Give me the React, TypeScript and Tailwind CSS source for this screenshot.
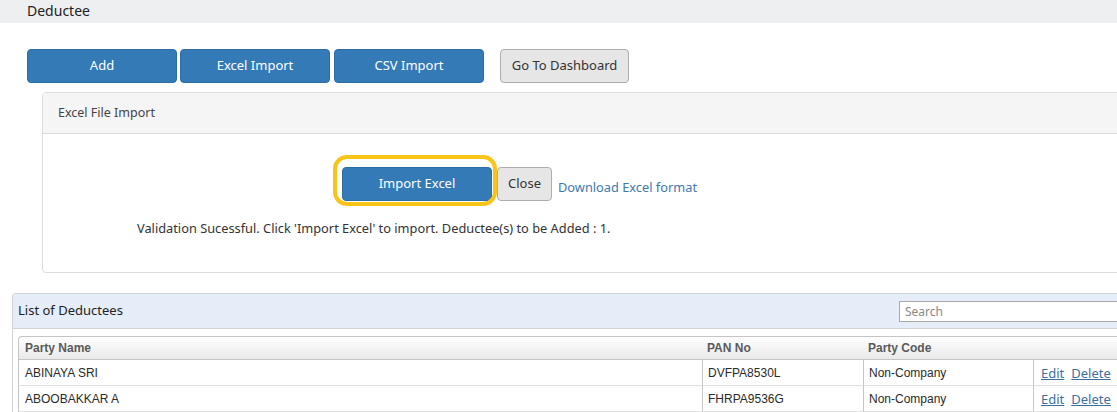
import React from "react";

type Deductee = { name: string; pan: string; code: string };

const ROWS: Deductee[] = [
  { name: "ABINAYA SRI", pan: "DVFPA8530L", code: "Non-Company" },
  { name: "ABOOBAKKAR A", pan: "FHRPA9536G", code: "Non-Company" },
];

const BLUE_BTN =
  "h-[34px] rounded-[4px] border border-[#2e6da4] bg-[#337ab7] text-white text-[13px] flex items-center justify-center";

export default function App() {
  return (
    <div className="w-[1117px] h-[412px] overflow-hidden bg-white text-[#333] font-['Noto_Sans',sans-serif]">
      <div className="h-[23px] bg-[#eeeff1] pl-[27px] text-[14px] leading-[22px] text-[#222]">Deductee</div>

      {/* top actions */}
      <div className="flex items-center pl-[27px] pt-[26px]">
        <button type="button" className={`${BLUE_BTN} w-[150px]`}>
          Add
        </button>
        <button type="button" className={`${BLUE_BTN} w-[150px] ml-[3px]`}>
          Excel Import
        </button>
        <button type="button" className={`${BLUE_BTN} w-[150px] ml-[4px]`}>
          CSV Import
        </button>
        <button
          type="button"
          className="h-[34px] w-[129px] ml-[16px] rounded-[4px] border border-[#adadad] bg-[#e6e6e6] text-[13px] text-[#333] flex items-center justify-center"
        >
          Go To Dashboard
        </button>
      </div>

      {/* excel import panel */}
      <div className="mt-[9px] ml-[42px] mr-[-20px] rounded-[4px] border border-[#dddddd]">
        <div className="h-[41px] bg-[#f5f5f5] border-b border-[#dddddd] pl-[15px] flex items-center text-[12.5px] text-[#444]">
          Excel File Import
        </div>
        <div className="h-[138px] pt-[33px]">
          <div className="flex items-center pl-[299px]">
            <div className="relative">
              <button type="button" className={`${BLUE_BTN} w-[150px]`}>
                Import Excel
              </button>
              <span className="absolute left-[-9px] right-[-5px] top-[-12px] bottom-[-5px] rounded-[14px] border-[4px] border-[#f8c418] pointer-events-none" />
            </div>
            <button
              type="button"
              className="h-[34px] w-[55px] ml-[5px] rounded-[4px] border border-[#adadad] bg-[#e6e6e6] text-[13px] text-[#333] flex items-center justify-center"
            >
              Close
            </button>
            <a href="#" className="ml-[6px] mt-[8px] text-[12.8px] text-[#4279ad]">
              Download Excel format
            </a>
          </div>
          <p className="mt-[18px] pl-[94px] text-[12.8px] text-[#333]">
            Validation Sucessful. Click 'Import Excel' to import. Deductee(s) to be Added : 1.
          </p>
        </div>
      </div>

      {/* list of deductees */}
      <div className="mt-[20px] ml-[12px] mr-[-20px] border border-[#d3d3d3] rounded-tl-[3px]">
        <div className="h-[35px] bg-[#e5edf8] border-b border-[#d3d3d3] pl-[5px] flex items-center justify-between">
          <span className="text-[13px] text-[#222]">List of Deductees</span>
          <input
            type="text"
            placeholder="Search"
            className="w-[235px] h-[21px] mr-[2px] border border-[#a9a9a9] bg-white px-[5px] text-[12px] placeholder:text-[#888] outline-none"
          />
        </div>
        <div className="pt-[7px] pl-[5px]">
          <table className="w-[1120px] border-separate border-spacing-0 font-['Liberation_Sans',Arial,sans-serif] text-[12px]">
            <thead>
              <tr className="h-[24px] bg-gradient-to-b from-white to-[#e9e9e9] text-left text-[#5a5a5a]">
                <th className="w-[684px] pl-[6px] font-bold border-t border-l border-b border-[#c5c5c5] rounded-tl-[4px]">
                  Party Name
                </th>
                <th className="w-[161px] pl-[5px] font-bold border-t border-b border-[#c5c5c5]">PAN No</th>
                <th className="w-[170px] pl-[5px] font-bold border-t border-b border-[#c5c5c5]">Party Code</th>
                <th className="border-t border-b border-[#c5c5c5]" />
              </tr>
            </thead>
            <tbody>
              {ROWS.map((r) => (
                <tr key={r.pan} className="h-[26px] text-[#2a2a2a]">
                  <td className="pl-[6px] border-l border-b border-[#c5c5c5] border-b-[#e2e2e2]">{r.name}</td>
                  <td className="pl-[5px] border-l border-b border-[#c5c5c5] border-b-[#e2e2e2]">{r.pan}</td>
                  <td className="pl-[5px] border-l border-b border-[#c5c5c5] border-b-[#e2e2e2]">{r.code}</td>
                  <td className="pl-[7px] pt-[3px] border-l border-b border-[#c5c5c5] border-b-[#e2e2e2] font-['Noto_Sans',sans-serif] text-[13px]">
                    <a href="#" className="text-[#3b6f9e] underline">
                      Edit
                    </a>
                    <a href="#" className="ml-[7px] text-[#3b6f9e] underline">
                      Delete
                    </a>
                  </td>
                </tr>
              ))}
            </tbody>
          </table>
        </div>
      </div>
    </div>
  );
}
